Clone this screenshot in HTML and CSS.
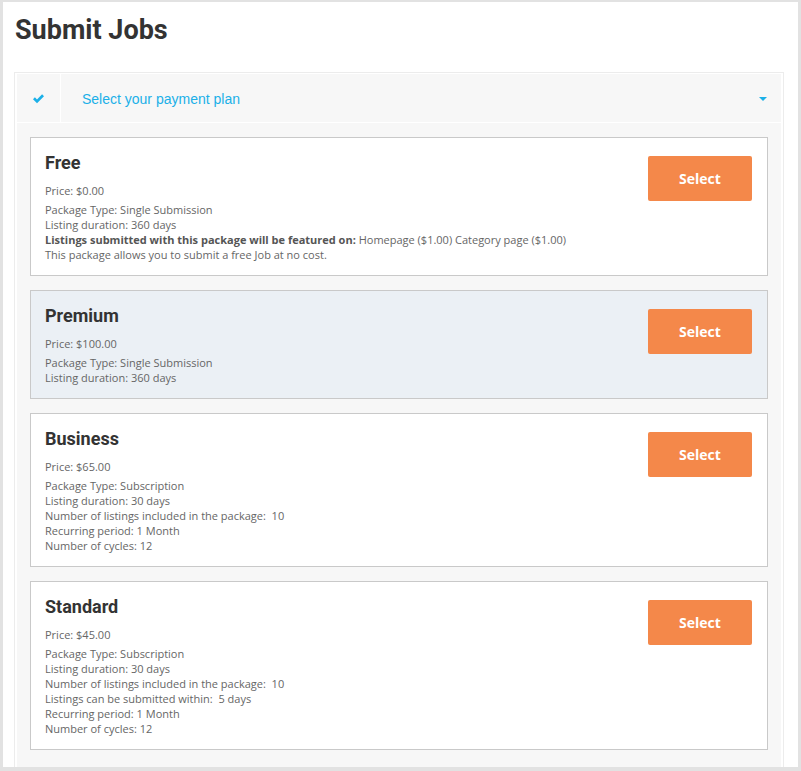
FILE: index.html
```html
<!DOCTYPE html>
<html>
<head>
<meta charset="utf-8">
<link rel="stylesheet" href="styles.css">
</head>
<body>
<div class="page">
  <h1 class="title">Submit Jobs</h1>
  <div class="accordion">
    <div class="panel">
      <div class="panel-head">
        <div class="step-icon">
          <svg width="13" height="10" viewBox="0 0 13 10"><path d="M1 5.2 L2.9 3.3 L5 5.4 L10.1 0.3 L12 2.2 L5 9.2 Z" fill="#1bb0e8"/></svg>
        </div>
        <div class="step-label">Select your payment plan</div>
        <div class="caret"></div>
      </div>
      <div class="panel-body">
        <div class="plan">
          <div class="plan-info">
            <div class="plan-name">Free</div>
            <div class="plan-price">Price: $0.00</div>
            <div class="plan-details">
              <div>Package Type: Single Submission</div>
              <div>Listing duration: 360 days</div>
              <div><b>Listings submitted with this package will be featured on:</b> Homepage ($1.00) Category page ($1.00)</div>
              <div>This package allows you to submit a free Job at no cost.</div>
            </div>
          </div>
          <button class="select-btn">Select</button>
        </div>
        <div class="plan plan-active">
          <div class="plan-info">
            <div class="plan-name">Premium</div>
            <div class="plan-price">Price: $100.00</div>
            <div class="plan-details">
              <div>Package Type: Single Submission</div>
              <div>Listing duration: 360 days</div>
            </div>
          </div>
          <button class="select-btn">Select</button>
        </div>
        <div class="plan">
          <div class="plan-info">
            <div class="plan-name">Business</div>
            <div class="plan-price">Price: $65.00</div>
            <div class="plan-details">
              <div>Package Type: Subscription</div>
              <div>Listing duration: 30 days</div>
              <div>Number of listings included in the package:&nbsp; 10</div>
              <div>Recurring period: 1 Month</div>
              <div>Number of cycles: 12</div>
            </div>
          </div>
          <button class="select-btn">Select</button>
        </div>
        <div class="plan">
          <div class="plan-info">
            <div class="plan-name">Standard</div>
            <div class="plan-price">Price: $45.00</div>
            <div class="plan-details">
              <div>Package Type: Subscription</div>
              <div>Listing duration: 30 days</div>
              <div>Number of listings included in the package:&nbsp; 10</div>
              <div>Listings can be submitted within:&nbsp; 5 days</div>
              <div>Recurring period: 1 Month</div>
              <div>Number of cycles: 12</div>
            </div>
          </div>
          <button class="select-btn">Select</button>
        </div>
      </div>
    </div>
  </div>
</div>
</body>
</html>
```
FILE: styles.css
```css
html, body {
  margin: 0;
  padding: 0;
  background: #e2e2e2;
  height: 100%;
  overflow: hidden;
}
.page {
  margin: 2px 3px 0 3px;
  height: 765px;
  background: #fff;
  overflow: hidden;
  box-sizing: border-box;
  padding: 0 14px 0 11px;
}
.title {
  margin: 0;
  padding: 13px 0 0 1px;
  height: 70px;
  box-sizing: border-box;
  font-family: Roboto, "Liberation Sans", sans-serif;
  font-weight: 700;
  font-size: 27px;
  line-height: 30px;
  color: #333;
}
.accordion {
  border: 1px solid #ececec;
  padding: 1px 2px 0 2px;
}
.panel {
  background: #f7f7f7;
}
.panel-head {
  display: flex;
  align-items: center;
  height: 48px;
  border-bottom: 1px solid #fff;
}
.step-icon {
  width: 43px;
  height: 100%;
  border-right: 1px solid #fff;
  display: flex;
  align-items: center;
  justify-content: center;
}
.step-icon svg { display: block; margin-top: 1px; }
.step-label {
  flex: 1;
  padding-left: 21px;
  font-family: "Liberation Sans", Arial, sans-serif;
  font-size: 14px;
  color: #1bb0e8;
  padding-top: 1px;
}
.caret {
  width: 0;
  height: 0;
  border-left: 4px solid transparent;
  border-right: 4px solid transparent;
  border-top: 4px solid #1bb0e8;
  margin-right: 14px;
  margin-top: 2px;
}
.panel-body {
  padding: 14px 13px 60px 13px;
  display: flex;
  flex-direction: column;
  gap: 14px;
}
.plan {
  display: flex;
  align-items: flex-start;
  justify-content: space-between;
  border: 1px solid #c9c9c9;
  background: #fff;
  padding: 13px 15px 13px 14px;
}
.plan-active {
  background: #ebf0f5;
}
.plan-name {
  font-family: Roboto, "Liberation Sans", sans-serif;
  font-weight: 700;
  font-size: 18px;
  line-height: 24px;
  color: #333;
  margin-bottom: 8px;
}
.plan-price, .plan-details {
  font-family: "Open Sans", "Liberation Sans", sans-serif;
  font-size: 11px;
  line-height: 15px;
  color: #666;
}
.plan-details { margin-top: 4px; }
.plan-details b { font-weight: 700; color: #555; }
.select-btn {
  margin-top: 5px;
  width: 104px;
  height: 45px;
  border: none;
  border-radius: 2px;
  background: #f4884a;
  color: #fff;
  font-family: "Open Sans", "Liberation Sans", sans-serif;
  font-weight: 700;
  font-size: 14px;
  padding: 0;
  flex-shrink: 0;
}
```
